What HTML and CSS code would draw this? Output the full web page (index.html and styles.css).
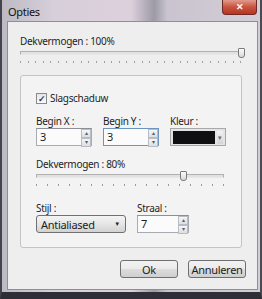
FILE: index.html
```html
<!DOCTYPE html>
<html lang="nl">
<head>
  <meta charset="UTF-8" />
  <title>Opties</title>
  <link rel="stylesheet" href="styles.css">
</head>
<body>
  <div class="window">
    <div class="titlebar">
      <span class="title">Opties</span>
      <span class="close">&#x2715;</span>
    </div>
    <div class="client">
      <div class="label">Dekvermogen : 100%</div>
      <div class="slider slider-full">
        <div class="track"></div>
        <div class="thumb thumb-end"></div>
        <div class="ticks"></div>
      </div>

      <div class="group">
        <label class="check-row">
          <span class="checkbox">&#x2713;</span>
          <span>Slagschaduw</span>
        </label>

        <div class="field-row">
          <div class="field">
            <div class="label">Begin X :</div>
            <div class="spin">
              <span class="spin-value">3</span>
              <span class="spin-arrows"><span>&#x25B4;</span><span>&#x25BE;</span></span>
            </div>
          </div>
          <div class="field">
            <div class="label">Begin Y :</div>
            <div class="spin spin-focus">
              <span class="spin-value">3</span>
              <span class="spin-arrows"><span>&#x25B4;</span><span>&#x25BE;</span></span>
            </div>
          </div>
          <div class="field">
            <div class="label">Kleur :</div>
            <div class="colorpick">
              <span class="swatch"></span>
              <span class="drop">&#x25BE;</span>
            </div>
          </div>
        </div>

        <div class="label label-gap">Dekvermogen : 80%</div>
        <div class="slider slider-inner">
          <div class="track"></div>
          <div class="thumb thumb-80"></div>
          <div class="ticks ticks-wide"></div>
        </div>

        <div class="field-row field-row-low">
          <div class="field">
            <div class="label">Stijl :</div>
            <div class="combo">
              <span>Antialiased</span>
              <span class="combo-arrow">&#x25BC;</span>
            </div>
          </div>
          <div class="field">
            <div class="label">Straal :</div>
            <div class="spin spin-small">
              <span class="spin-value">7</span>
              <span class="spin-arrows"><span>&#x25B4;</span><span>&#x25BE;</span></span>
            </div>
          </div>
        </div>
      </div>

      <div class="buttons">
        <button class="btn">Ok</button>
        <button class="btn">Annuleren</button>
      </div>
    </div>
  </div>
</body>
</html>
```

FILE: styles.css
```css
body {
  margin: 0;
  font-family: "Noto Sans", "Open Sans", sans-serif;
  font-size: 10px;
  letter-spacing: -0.3px;
  color: #1e1e1e;
  background: #3a3a44;
}
.window {
  width: 262px;
  height: 299px;
  box-sizing: border-box;
  border-left: 2px solid #44444e;
  border-right: 2px solid #4a4a54;
  border-bottom: 7px solid #2e2e36;
  background: linear-gradient(90deg, #bdbac4 0%, #d7cfd9 20%, #ddd0dd 50%, #9c9aa6 59%, #c9c4cf 64%, #d2cdd6 100%);
  display: flex;
  flex-direction: column;
}
.titlebar {
  height: 21px;
  display: flex;
  justify-content: space-between;
  align-items: flex-start;
  padding-left: 6px;
}
.title {
  font-size: 11px;
  color: #101010;
  margin-top: 4px;
}
.close {
  width: 35px;
  height: 15px;
  box-sizing: border-box;
  margin-right: 3px;
  border: 1px solid #6d2a24;
  border-top: none;
  border-radius: 0 0 4px 4px;
  background: linear-gradient(#e29a8c, #c9533f 50%, #b8341f);
  color: #fff;
  font-size: 9px;
  font-weight: bold;
  text-align: center;
  line-height: 14px;
  letter-spacing: 0;
}
.client {
  flex: 1;
  margin: 0 2px 2px 5px;
  border: 1px solid #8e8e96;
  background: #eeeeee;
  padding: 12px 11px 0 12px;
  display: flex;
  flex-direction: column;
}
.label {
  line-height: 14px;
  height: 14px;
}
.slider {
  position: relative;
  height: 14px;
}
.slider-full {
  width: 224px;
}
.slider-inner {
  width: 190px;
}
.track {
  height: 2px;
  margin-top: 3px;
  border: 1px solid #b0b0b0;
  border-bottom-color: #e8e8e8;
  background: #e2e2e2;
  width: calc(100% - 4px);
}
.thumb {
  position: absolute;
  top: 0;
  width: 5px;
  height: 8px;
  border: 1px solid #7a7a7a;
  border-radius: 1px 1px 3px 3px;
  background: linear-gradient(#fbfbfb, #d8d8d8);
}
.thumb-end {
  left: 218px;
}
.thumb-80 {
  left: 144px;
}
.ticks {
  height: 2px;
  margin-top: 6px;
  width: calc(100% - 2px);
  background: repeating-linear-gradient(90deg, #a0a0a0 0 1px, transparent 1px 7.6px);
}
.ticks-wide {
  background: repeating-linear-gradient(90deg, #9a9a9a 0 1px, transparent 1px 11px);
}
.group {
  margin-top: 13px;
  width: 222px;
  height: 173px;
  box-sizing: border-box;
  border: 1px solid #c4c4c8;
  border-radius: 3px;
  background: #f3f3f3;
  padding: 16px 0 0 15px;
  display: flex;
  flex-direction: column;
}
.check-row {
  display: flex;
  align-items: center;
  gap: 3px;
  height: 12px;
}
.checkbox {
  width: 9px;
  height: 9px;
  border: 1px solid #8a8a8a;
  background: linear-gradient(#e6e6e6, #fafafa);
  color: #263a6a;
  font-size: 9px;
  line-height: 9px;
  text-align: center;
  font-weight: bold;
}
.field-row {
  display: flex;
  margin-top: 10px;
}
.label-gap {
  margin-top: 11px;
}
.field-row-low {
  margin-top: 16px;
}
.field {
  margin-right: 11px;
}
.spin {
  width: 56px;
  height: 18px;
  box-sizing: border-box;
  border: 1px solid #a9abb3;
  border-top-color: #8c8f99;
  background: #fbfbfb;
  display: flex;
  justify-content: space-between;
  font-size: 11px;
}
.spin-focus {
  border-color: #6e95c0;
}
.spin-small {
  width: 52px;
}
.spin-value {
  padding-left: 3px;
  line-height: 16px;
}
.spin-arrows {
  width: 10px;
  display: flex;
  flex-direction: column;
  font-size: 6px;
  line-height: 7px;
  color: #4c607a;
  text-align: center;
}
.spin-arrows span {
  flex: 1;
  border: 1px solid #b8bcc4;
  background: linear-gradient(#f6f6f6, #dedede);
}
.colorpick {
  width: 56px;
  height: 18px;
  box-sizing: border-box;
  border: 1px solid #a8a8a8;
  background: #e4e4e4;
  display: flex;
  align-items: center;
  padding: 2px;
  gap: 2px;
}
.swatch {
  width: 42px;
  height: 13px;
  background: #101012;
}
.drop {
  flex: 1;
  height: 13px;
  font-size: 7px;
  line-height: 13px;
  text-align: center;
  color: #6a6a6a;
  background: linear-gradient(#f2f2f2, #d4d4d4);
}
.combo {
  width: 90px;
  height: 18px;
  box-sizing: border-box;
  border: 1px solid #707070;
  border-radius: 3px;
  background: linear-gradient(#f4f4f4, #e6e6e6 50%, #d2d2d2);
  display: flex;
  justify-content: space-between;
  align-items: center;
  padding: 0 5px 0 4px;
  font-size: 11px;
}
.combo-arrow {
  font-size: 6px;
  color: #222;
}
.buttons {
  display: flex;
  justify-content: flex-end;
  gap: 10px;
  margin-top: 12px;
}
.btn {
  width: 58px;
  height: 18px;
  padding: 0;
  font-family: "Noto Sans", "Open Sans", sans-serif;
  font-size: 11px;
  letter-spacing: -0.3px;
  color: #1e1e1e;
  border: 1px solid #707070;
  border-radius: 3px;
  background: linear-gradient(#f2f2f2, #ebebeb 50%, #dddddd 51%, #cfcfcf);
}
```
